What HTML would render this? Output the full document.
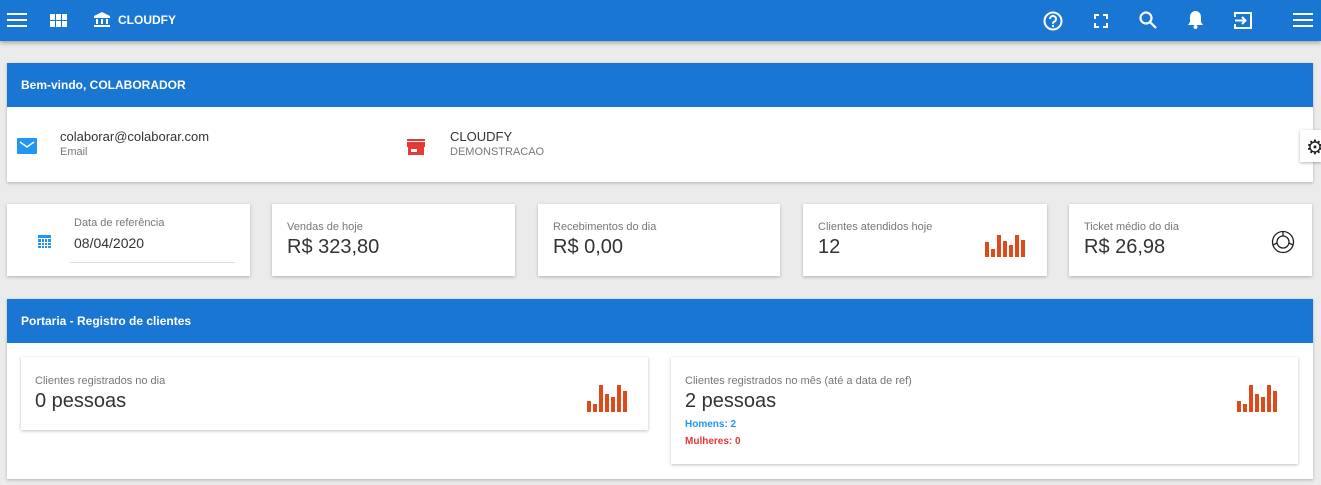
<!DOCTYPE html>
<html><head><meta charset="utf-8"><style>
*{margin:0;padding:0;box-sizing:border-box}
body{width:1321px;height:485px;background:#ebebeb;font-family:"Liberation Sans",Arial,sans-serif;position:relative;overflow:hidden;color:#333}
.abs{position:absolute}
.top{left:0;top:0;width:1321px;height:41px;background:#1976d2;box-shadow:0 2px 4px rgba(0,0,0,.3)}
.card{position:absolute;background:#fff;box-shadow:0 1px 3px rgba(0,0,0,.25)}
.hdr{position:absolute;left:0;top:0;right:0;height:44px;background:#1976d2;color:#fff;font-weight:bold;font-size:12px;line-height:44px;padding-left:14px}
.lbl{font-size:11px;color:#777}
.big{font-size:20px;color:#333}
</style></head><body>
<div class="abs top">
<svg class="abs" style="left:7px;top:12px" width="20" height="16"><rect y="1" width="20" height="2" fill="#fff"/><rect y="7" width="20" height="2" fill="#fff"/><rect y="13" width="20" height="2" fill="#fff"/></svg>
<svg class="abs" style="left:50px;top:14px" width="17" height="13" fill="#fff"><rect width="5" height="6"/><rect x="6" width="5" height="6"/><rect x="12" width="5" height="6"/><rect y="7" width="5" height="6"/><rect x="6" y="7" width="5" height="6"/><rect x="12" y="7" width="5" height="6"/></svg>
<svg class="abs" style="left:94px;top:12px" width="16" height="15" fill="#fff"><path d="M8 0L0 4v2h16V4z"/><rect x="2" y="7" width="2" height="5"/><rect x="7" y="7" width="2" height="5"/><rect x="12" y="7" width="2" height="5"/><rect y="13" width="16" height="2"/></svg>
<div class="abs" style="left:118px;top:13px;color:#fff;font-weight:bold;font-size:12px">CLOUDFY</div>
<svg class="abs" style="left:1043px;top:11px" width="20" height="20"><circle cx="10" cy="10" r="8.5" stroke="#fff" stroke-width="2" fill="none"/><path d="M7 8a3 3 0 1 1 4 2.8c-1 .5-1 1-1 2" stroke="#fff" stroke-width="2" fill="none"/><circle cx="10" cy="15" r="1.2" fill="#fff"/></svg>
<svg class="abs" style="left:1094px;top:14px" width="14" height="14" stroke="#fff" stroke-width="2" fill="none"><path d="M1 5V1h4M9 1h4v4M13 9v4H9M5 13H1V9"/></svg>
<svg class="abs" style="left:1139px;top:11px" width="18" height="18" stroke="#fff" stroke-width="2.2" fill="none"><circle cx="7" cy="7" r="5.5"/><path d="M11 11l6 6"/></svg>
<svg class="abs" style="left:1187px;top:10px" width="17" height="20" fill="#fff"><path d="M8.5 1c-3.5 0-5.5 3-5.5 6v5l-2 3h15l-2-3V7c0-3-2-6-5.5-6z"/><circle cx="8.5" cy="17" r="2"/></svg>
<svg class="abs" style="left:1234px;top:11px" width="19" height="19" fill="none" stroke="#fff" stroke-width="2"><path d="M1 6V2h16v15H1v-4"/><path d="M1 9.5h10M8 6l3.5 3.5L8 13"/></svg>
<svg class="abs" style="left:1293px;top:12px" width="20" height="16"><rect y="1" width="20" height="2" fill="#fff"/><rect y="7" width="20" height="2" fill="#fff"/><rect y="13" width="20" height="2" fill="#fff"/></svg>
</div>

<div class="card" style="left:7px;top:63px;width:1306px;height:119px">
<div class="hdr">Bem-vindo, COLABORADOR</div>
<svg class="abs" style="left:10px;top:75px" width="20" height="16"><rect width="20" height="16" rx="1" fill="#2196f3"/><path d="M3 4l7 5 7-5" stroke="#fff" stroke-width="1.5" fill="none"/></svg>
<div class="abs" style="left:53px;top:66px;font-size:13px;color:#333">colaborar@colaborar.com</div>
<div class="abs lbl" style="left:53px;top:83px">Email</div>
<svg class="abs" style="left:400px;top:76px" width="18" height="16" fill="#e53935"><rect width="18" height="2"/><path d="M0 3h18v5H0z"/><rect x="1" y="8" width="16" height="8"/><rect x="4" y="10" width="6" height="3" fill="#fff"/></svg>
<div class="abs" style="left:443px;top:66px;font-size:13px;color:#333">CLOUDFY</div>
<div class="abs lbl" style="left:443px;top:83px">DEMONSTRACAO</div>
</div>
<div class="abs" style="left:1300px;top:130px;width:21px;height:32px;background:#fff;box-shadow:0 1px 3px rgba(0,0,0,.3)"><div style="position:absolute;left:6px;top:5px;font-size:20px;color:#222">⚙</div></div>

<div class="card" style="left:7px;top:204px;width:243px;height:72px">
<svg class="abs" style="left:31px;top:31px" width="13" height="13" fill="#2196f3"><rect width="13" height="13"/><g fill="#fff"><rect x="0" y="3" width="13" height="1"/><rect x="3" y="4" width="1" height="9"/><rect x="6" y="4" width="1" height="9"/><rect x="9" y="4" width="1" height="9"/><rect y="7" width="13" height="1"/><rect y="10" width="13" height="1"/></g></svg>
<div class="abs lbl" style="left:67px;top:13px">Data de referência</div>
<div class="abs" style="left:67px;top:31px;font-size:14px">08/04/2020</div>
<div class="abs" style="left:63px;top:58px;width:165px;height:1px;background:#ddd"></div>
</div>
<div class="card" style="left:272px;top:204px;width:243px;height:72px"><div class="abs lbl" style="left:15px;top:17px">Vendas de hoje</div><div class="abs big" style="left:15px;top:32px">R$ 323,80</div></div>
<div class="card" style="left:538px;top:204px;width:242px;height:72px"><div class="abs lbl" style="left:15px;top:17px">Recebimentos do dia</div><div class="abs big" style="left:15px;top:32px">R$ 0,00</div></div>
<div class="card" style="left:803px;top:204px;width:244px;height:72px"><div class="abs lbl" style="left:15px;top:17px">Clientes atendidos hoje</div><div class="abs big" style="left:15px;top:32px">12</div>
<svg class="abs" style="left:182px;top:27px" width="44" height="27" fill="#dd4b1a"><rect x="0" y="11" width="4" height="15"/><rect x="6" y="18" width="4" height="8"/><rect x="12" y="4" width="4" height="22"/><rect x="18" y="10" width="4" height="16"/><rect x="24" y="14" width="4" height="12"/><rect x="30" y="4" width="4" height="22"/><rect x="36" y="9" width="4" height="17"/></svg></div>
<div class="card" style="left:1069px;top:204px;width:243px;height:72px"><div class="abs lbl" style="left:15px;top:17px">Ticket médio do dia</div><div class="abs big" style="left:15px;top:32px">R$ 26,98</div>
<svg class="abs" style="left:202px;top:26px" width="24" height="24" fill="none" stroke="#222" stroke-width="1.3"><circle cx="12" cy="12" r="10.5"/><circle cx="12" cy="12" r="6"/><path d="M12 1.5v4.5M6 13l-4 2M18 13l4 2"/></svg></div>

<div class="card" style="left:7px;top:299px;width:1306px;height:180px">
<div class="hdr">Portaria - Registro de clientes</div>
<div class="card" style="left:14px;top:58px;width:627px;height:73px"><div class="abs lbl" style="left:14px;top:18px">Clientes registrados no dia</div><div class="abs big" style="left:14px;top:33px">0 pessoas</div>
<svg class="abs" style="left:566px;top:28px" width="44" height="27" fill="#dd4b1a"><rect x="0" y="16" width="4" height="11"/><rect x="6" y="19" width="4" height="8"/><rect x="12" y="0" width="4" height="27"/><rect x="18" y="9" width="4" height="18"/><rect x="24" y="12" width="4" height="15"/><rect x="30" y="0" width="4" height="27"/><rect x="36" y="6" width="4" height="21"/></svg></div>
<div class="card" style="left:664px;top:58px;width:627px;height:107px"><div class="abs lbl" style="left:14px;top:18px">Clientes registrados no mês (até a data de ref)</div><div class="abs big" style="left:14px;top:33px">2 pessoas</div>
<div class="abs" style="left:14px;top:62px;font-size:10px;font-weight:bold;color:#2196f3">Homens: 2</div>
<div class="abs" style="left:14px;top:79px;font-size:10px;font-weight:bold;color:#e53935">Mulheres: 0</div>
<svg class="abs" style="left:566px;top:28px" width="44" height="27" fill="#dd4b1a"><rect x="0" y="16" width="4" height="11"/><rect x="6" y="19" width="4" height="8"/><rect x="12" y="0" width="4" height="27"/><rect x="18" y="9" width="4" height="18"/><rect x="24" y="12" width="4" height="15"/><rect x="30" y="0" width="4" height="27"/><rect x="36" y="6" width="4" height="21"/></svg></div>
</div>
</body></html>
